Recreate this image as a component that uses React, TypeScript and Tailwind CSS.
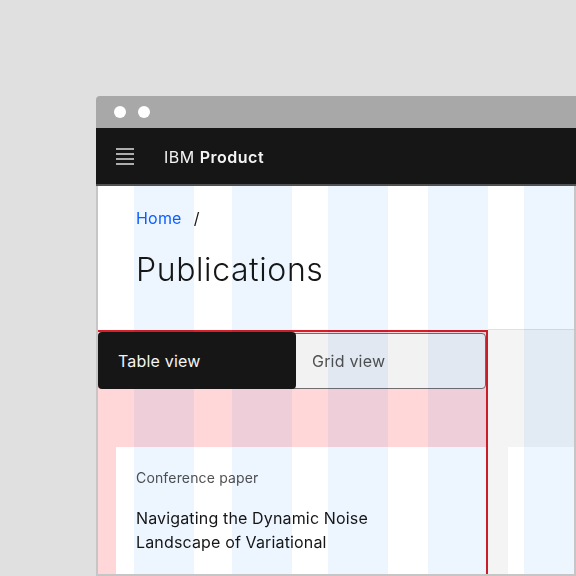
import React from "react";

export default function App() {
  return (
    <div className="w-[576px] h-[576px] bg-[#e0e0e0] pt-[96px] pl-[96px] overflow-hidden font-['Inter',sans-serif]">
      <div className="w-[480px] h-[480px] flex flex-col">
        {/* browser chrome */}
        <div className="h-[32px] shrink-0 bg-[#a8a8a8] rounded-tl-[4px] flex items-center pl-[18px] gap-[12px]">
          <div className="w-[12px] h-[12px] rounded-full bg-white" />
          <div className="w-[12px] h-[12px] rounded-full bg-white" />
        </div>
        {/* app header */}
        <div className="h-[58px] shrink-0 bg-[#161616] border-b-2 border-[#525252] flex items-center pl-[20px]">
          <svg width="18" height="17" viewBox="0 0 18 17" className="mt-[1px]">
            <g stroke="#e0e0e0" strokeWidth="1.5">
              <line x1="0" y1="1" x2="18" y2="1" />
              <line x1="0" y1="6" x2="18" y2="6" />
              <line x1="0" y1="11" x2="18" y2="11" />
              <line x1="0" y1="16" x2="18" y2="16" />
            </g>
          </svg>
          <div className="ml-[30px] mt-[2px] text-[16px] leading-[24px] tracking-[0.5px] text-[#f4f4f4]">
            IBM <span className="font-semibold">Product</span>
          </div>
        </div>
        {/* content */}
        <div className="relative flex-1 flex flex-col bg-white border-x-2 border-b-2 border-[#c6c6c6] overflow-hidden">
          <div className="h-[144px] shrink-0 pl-[38px] pt-[20px]">
            <div className="flex items-center text-[16px] leading-[24px] tracking-[0.2px]">
              <span className="text-[#0f62fe]">Home</span>
              <span className="ml-[12px] text-[#161616]">/</span>
            </div>
            <div className="mt-[20px] text-[32px] leading-[40px] font-light tracking-[0.6px] text-[#161616]">
              Publications
            </div>
          </div>
          <div className="flex-1 flex">
            <div className="w-[390px] shrink-0 flex flex-col bg-[#ffd7d9] border-t-2 border-r-2 border-[#da1e28]">
              <div className="h-[57px] shrink-0 flex items-center">
                <div className="relative z-10 w-[198px] h-[57px] shrink-0 bg-[#161616] rounded-[4px] flex items-center pl-[20px] text-[16px] tracking-[0.2px] text-[#f4f4f4]">
                  Table view
                </div>
                <div className="-ml-[6px] flex-1 h-[56px] bg-[#f2f2f2] border border-[#6f6f6f] rounded-r-[4px] flex items-center pl-[21px] text-[16px] tracking-[0.2px] text-[#525252]">
                  Grid view
                </div>
              </div>
              <div className="h-[58px] shrink-0" />
              <div className="flex-1 ml-[18px] bg-white pl-[20px] pt-[21px]">
                <div className="text-[14px] leading-[20px] tracking-[0.16px] text-[#525252]">
                  Conference paper
                </div>
                <div className="mt-[18px] text-[16px] leading-[24px] tracking-[0.15px] text-[#161616]">
                  Navigating the Dynamic Noise
                  <br />
                  Landscape of Variational
                </div>
              </div>
            </div>
            <div className="flex-1 flex flex-col bg-[#f4f4f4] border-t border-[#e0e0e0] -mt-px pt-[117px] pl-[20px]">
              <div className="flex-1 bg-white" />
            </div>
          </div>
          {/* column grid overlay */}
          <div className="absolute inset-0 flex pointer-events-none">
            <div className="ml-[36px] w-[60px] bg-[#edf5ff] mix-blend-multiply" />
            <div className="ml-[38px] w-[60px] bg-[#edf5ff] mix-blend-multiply" />
            <div className="ml-[36px] w-[60px] bg-[#edf5ff] mix-blend-multiply" />
            <div className="ml-[40px] w-[60px] bg-[#edf5ff] mix-blend-multiply" />
            <div className="ml-[36px] flex-1 bg-[#edf5ff] mix-blend-multiply" />
          </div>
        </div>
      </div>
    </div>
  );
}
